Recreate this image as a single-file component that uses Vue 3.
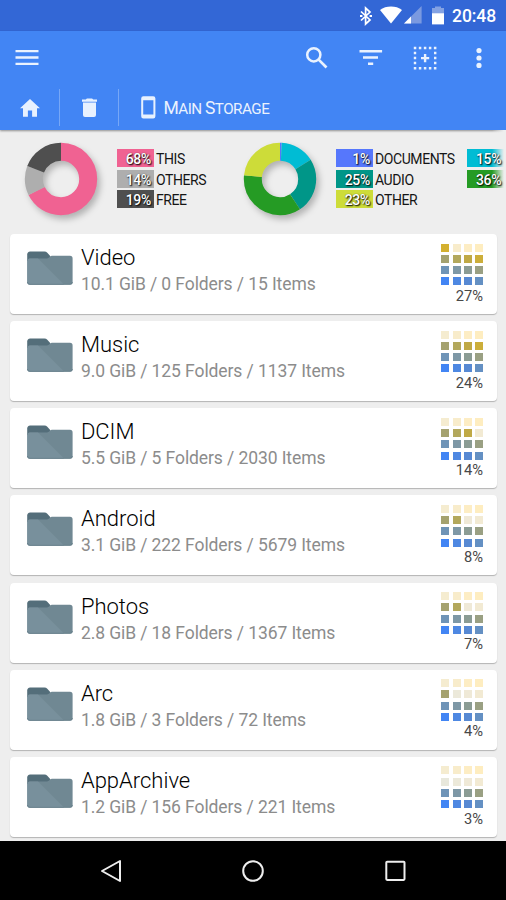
<script setup>
const lit = [
  '#d4b02f', '#d8b32c', '#dcb628', '#e0b824',
  '#a5a26f', '#b3a85c', '#c0a945', '#ccae3a',
  '#6f94b7', '#7e98a6', '#8b9c94', '#9aa083',
  '#4285f4', '#4e88e2', '#5789d3', '#6490c3',
]
const dim = [
  '#f5ecd0', '#f8eccb', '#fdedc4', '#feedc0',
  '#e8e8dc', '#ece9da', '#efe9d7', '#f2ead3',
  '#dfe6ee', '#e2e7ea', '#e5e8e6', '#e8e9e2',
  '#d6e4fc', '#d8e4f8', '#dae5f5', '#dde6f2',
]
const folders = [
  { name: 'Video', info: '10.1 GiB / 0 Folders / 15 Items', pct: 27, cells: 13 },
  { name: 'Music', info: '9.0 GiB / 125 Folders / 1137 Items', pct: 24, cells: 12 },
  { name: 'DCIM', info: '5.5 GiB / 5 Folders / 2030 Items', pct: 14, cells: 11 },
  { name: 'Android', info: '3.1 GiB / 222 Folders / 5679 Items', pct: 8, cells: 10 },
  { name: 'Photos', info: '2.8 GiB / 18 Folders / 1367 Items', pct: 7, cells: 10 },
  { name: 'Arc', info: '1.8 GiB / 3 Folders / 72 Items', pct: 4, cells: 9 },
  { name: 'AppArchive', info: '1.2 GiB / 156 Folders / 221 Items', pct: 3, cells: 8 },
]
// Cells fill from the bottom row upwards, left to right within a row.
function cellColor(index, count) {
  const rank = (3 - Math.floor(index / 4)) * 4 + (index % 4)
  return rank < count ? lit[index] : dim[index]
}
const charts = [
  {
    arcs: [
      { from: 0, to: 67.7, color: '#f06292' },
      { from: 67.7, to: 80.9, color: '#aeaeae' },
      { from: 80.9, to: 100, color: '#4f4f4f' },
    ],
    legend: [
      [
        { pct: 68, label: 'THIS', color: '#f06292' },
        { pct: 14, label: 'OTHERS', color: '#aeaeae' },
        { pct: 19, label: 'FREE', color: '#4f4f4f' },
      ],
    ],
  },
  {
    arcs: [
      { from: 0, to: 0.8, color: '#5677fc' },
      { from: 0.8, to: 16.1, color: '#00bcd4' },
      { from: 16.1, to: 40.7, color: '#009688' },
      { from: 40.7, to: 76.7, color: '#259b24' },
      { from: 76.7, to: 100, color: '#cddc39' },
    ],
    legend: [
      [
        { pct: 1, label: 'DOCUMENTS', color: '#5677fc' },
        { pct: 25, label: 'AUDIO', color: '#009688' },
        { pct: 23, label: 'OTHER', color: '#cddc39' },
      ],
      [
        { pct: 15, label: '', color: '#00bcd4' },
        { pct: 36, label: '', color: '#259b24' },
      ],
    ],
  },
]
</script>

<template>
  <div class="screen">
    <div class="status">
      <svg class="bt" width="14" height="20" viewBox="0 0 14 20">
        <path d="M2 5.5 L11 14 L6.6 18 V2 L11 6 L2 14.5" fill="none" stroke="#fff" stroke-width="1.7" />
        <path d="M1 8.9h2.4v2.2H1zM10.6 8.9H13v2.2h-2.4z" fill="#fff" />
      </svg>
      <svg class="wifi" width="22" height="18" viewBox="0 0 22 18">
        <path d="M11 17.4 L0 4 C6 -.6 16 -.6 22 4 Z" fill="#fff" />
      </svg>
      <svg class="cell-signal" width="18" height="18" viewBox="0 0 18 18">
        <path d="M0 17.6 L17.6 0 V17.6 Z" fill="#7a99e0" />
        <path d="M0 17.6 L7 10.6 V17.6 Z" fill="#fff" />
      </svg>
      <svg class="battery" width="12" height="19" viewBox="0 0 12 19">
        <path d="M0 2h3V.4h6V2h3v5.2H0z" fill="#84a2e3" />
        <path d="M0 7.2h12V18.4H0z" fill="#fff" />
      </svg>
      <span class="clock">20:48</span>
    </div>

    <header>
      <div class="toolbar">
        <svg class="menu" width="24" height="18" viewBox="0 0 24 18">
          <path d="M.5 2.1h23M.5 8.5h23M.5 14.9h23" stroke="#eaf2fe" stroke-width="2.3" />
        </svg>
        <svg class="search" width="24" height="24" viewBox="0 0 24 24">
          <circle cx="8.8" cy="8.8" r="6.6" fill="none" stroke="#eaf2fe" stroke-width="2.5" />
          <path d="M13.4 13.4 L21.5 21.5" stroke="#eaf2fe" stroke-width="2.7" />
        </svg>
        <svg class="filter" width="24" height="18" viewBox="0 0 24 18">
          <path d="M.5 2.3h22.6M4 8.5H19M9 14.7h5.2" stroke="#eaf2fe" stroke-width="2.4" />
        </svg>
        <svg class="select" width="24" height="24" viewBox="0 0 24 24">
          <path
            d="M.8 2h22.6M.8 22.2h22.6M2 .8v22.6M22.2 .8v22.6"
            stroke="#eaf2fe" stroke-width="2.4" stroke-dasharray="2.5 2.52"
          />
          <path d="M12.1 8v8.2M8 12.1h8.2" stroke="#eaf2fe" stroke-width="2.4" />
        </svg>
        <svg class="more" width="6" height="22" viewBox="0 0 6 22">
          <circle cx="3" cy="3.6" r="2.6" fill="#eaf2fe" />
          <circle cx="3" cy="11" r="2.6" fill="#eaf2fe" />
          <circle cx="3" cy="18.4" r="2.6" fill="#eaf2fe" />
        </svg>
      </div>
      <nav class="crumbs">
        <div class="crumb home">
          <svg width="20" height="18" viewBox="0 0 20 18">
            <path d="M10 0 L20 9.2H17V17.8H12.1V11.4H7.9V17.8H3V9.2H0Z" fill="#e8f1fe" />
          </svg>
        </div>
        <div class="crumb bin">
          <svg width="15" height="20" viewBox="0 0 15 20">
            <path d="M0 1.6h3.8L4.9.4h5.2l1.1 1.2H15v2.2H0z" fill="#e8f1fe" />
            <path d="M1 4.4h13V17a2 2 0 0 1-2 2H3a2 2 0 0 1-2-2z" fill="#e8f1fe" />
          </svg>
        </div>
        <div class="crumb storage">
          <svg width="15" height="23" viewBox="0 0 15 23">
            <path
              fill-rule="evenodd" fill="#e8f1fe"
              d="M2.4 .3h9.8a2.2 2.2 0 0 1 2.2 2.2v17.8a2.2 2.2 0 0 1-2.2 2.2H2.4A2.2 2.2 0 0 1 .2 20.3V2.5A2.2 2.2 0 0 1 2.4 .3zM2.2 4.2v14.3h10.2V4.2z"
            />
          </svg>
          <span class="path"><span class="cap">M</span>AIN <span class="cap">S</span>TORAGE</span>
        </div>
      </nav>
    </header>

    <section class="charts">
      <div v-for="(chart, c) in charts" :key="c" class="chart">
        <svg class="donut" width="74" height="74" viewBox="-37 -37 74 74">
          <g transform="rotate(-90)">
            <circle
              v-for="arc in chart.arcs" :key="arc.from" r="27.2" fill="none" stroke-width="18"
              pathLength="100" :stroke="arc.color"
              :stroke-dasharray="`${arc.to - arc.from} 100`" :stroke-dashoffset="-arc.from"
            />
          </g>
        </svg>
        <div v-for="(column, k) in chart.legend" :key="k" class="legend">
          <div v-for="item in column" :key="item.pct" class="entry">
            <span class="swatch" :style="{ background: item.color }">
              <span class="value">{{ item.pct }}%</span>
            </span>
            <span class="label">{{ item.label }}</span>
          </div>
        </div>
      </div>
      <div class="fade"></div>
    </section>

    <main>
      <article v-for="f in folders" :key="f.name" class="card">
        <svg class="folder" width="46" height="35" viewBox="0 0 46 35">
          <path d="M.2 4a3 3 0 0 1 3-3.4H17.5a4 4 0 0 1 2.8 1.2L23 4.8V10H.2z" fill="#546e7a" />
          <path d="M3 7.4H19.5a4 4 0 0 0 2.6-1L23.2 5.3a3 3 0 0 1 1.7-.5H43a2.6 2.6 0 0 1 2.6 2.6V31a2.6 2.6 0 0 1-2.6 2.6H3A2.7 2.7 0 0 1 .3 31V10A2.7 2.7 0 0 1 3 7.4z" fill="#708893" />
          <path d="M3 7.4H11L37 33.6H3A2.7 2.7 0 0 1 .3 31V10A2.7 2.7 0 0 1 3 7.4z" fill="#78909c" />
          <path d="M.4 31a2.7 2.7 0 0 0 2.6 2.4H43A2.6 2.6 0 0 0 45.5 31" fill="none" stroke="#627b87" stroke-width=".8" />
        </svg>
        <div class="text">
          <div class="name">{{ f.name }}</div>
          <div class="info">{{ f.info }}</div>
        </div>
        <div class="usage">
          <div class="cells">
            <i v-for="(_, i) in lit" :key="i" :style="{ background: cellColor(i, f.cells) }"></i>
          </div>
          <div class="pct">{{ f.pct }}%</div>
        </div>
      </article>
    </main>

    <footer>
      <svg width="22" height="24" viewBox="0 0 22 24">
        <path d="M20 2 V22 L2 12 Z" fill="none" stroke="#eee" stroke-width="2" stroke-linejoin="round" />
      </svg>
      <svg width="24" height="24" viewBox="0 0 24 24">
        <circle cx="12" cy="12" r="9.8" fill="none" stroke="#eee" stroke-width="2" />
      </svg>
      <svg width="22" height="22" viewBox="0 0 22 22">
        <rect x="2.3" y="1.7" width="18.2" height="18.2" rx=".8" fill="none" stroke="#eee" stroke-width="2" />
      </svg>
    </footer>
  </div>
</template>

<style>
body {
  margin: 0;
  overflow: hidden;
}
</style>

<style scoped>
.screen {
  width: 506px;
  height: 900px;
  display: flex;
  flex-direction: column;
  overflow: hidden;
  background: #eee;
  font-family: Roboto, sans-serif;
}
svg {
  display: block;
  flex: none;
}
.status {
  height: 31px;
  flex: none;
  box-sizing: border-box;
  padding-right: 10px;
  display: flex;
  justify-content: flex-end;
  align-items: center;
  background: #3367d6;
}
.bt { margin-right: 7px; }
.wifi { margin-right: 2px; margin-bottom: 1px; }
.cell-signal { margin-right: 10px; margin-bottom: 1px; }
.battery { margin-right: 8px; margin-bottom: 1px; }
.clock {
  color: #fff;
  font-size: 17.5px;
  font-weight: 500;
  letter-spacing: -0.1px;
  line-height: 31px;
  padding-top: 1px;
}
header {
  height: 99px;
  flex: none;
  background: #4285f4;
  box-shadow: 0 1px 2px rgba(0, 0, 0, 0.4);
  position: relative;
}
.toolbar {
  height: 54px;
  display: flex;
  align-items: center;
  padding: 0 24px 0 15px;
}
.search { margin-left: auto; margin-right: 30px; }
.filter { margin-right: 30px; }
.select { margin-right: 39px; }
.crumbs {
  display: flex;
  height: 45px;
}
.crumb {
  display: flex;
  align-items: center;
  height: 37px;
  margin-top: 4px;
  box-sizing: border-box;
}
.home {
  width: 60px;
  padding-left: 20px;
  border-right: 1px solid #76a7f7;
}
.bin {
  width: 59px;
  padding-left: 22px;
  border-right: 1px solid #76a7f7;
}
.storage { padding-left: 22px; }
.path {
  margin-left: 7.5px;
  padding-top: 1px;
  color: #eaf2fe;
  font-size: 15.2px;
  letter-spacing: -0.5px;
  white-space: nowrap;
}
.cap { font-size: 17.5px; }
.charts {
  height: 104px;
  flex: none;
  display: flex;
  position: relative;
  overflow: hidden;
}
.chart {
  display: flex;
  padding: 12px 0 0 24px;
  width: 195px;
  flex: none;
}
.chart + .chart { width: 400px; }
.donut {
  overflow: visible;
  filter: drop-shadow(3px 4px 3px rgba(0, 0, 0, 0.25));
}
.legend {
  margin-left: 18.5px;
  padding-top: 7px;
  display: flex;
  flex-direction: column;
  gap: 2.5px;
}
.legend + .legend { margin-left: 12px; }
.entry {
  display: flex;
  height: 18px;
  line-height: 21px;
  font-size: 14px;
}
.swatch {
  width: 37px;
  box-sizing: border-box;
  padding-right: 2.5px;
  text-align: right;
}
.value {
  position: relative;
  z-index: 1;
  color: #fff;
  font-weight: 500;
  letter-spacing: -0.3px;
  text-shadow: 1px 1px 1.5px #000, 0 0 1px rgba(0, 0, 0, 0.5);
}
.label {
  margin-left: 2.5px;
  letter-spacing: -0.42px;
  color: #151515;
}
.fade {
  position: absolute;
  right: 2px;
  top: 0;
  width: 12px;
  height: 100px;
  background: linear-gradient(90deg, rgba(238, 238, 238, 0), #eee);
  box-shadow: 2px 0 #eee;
}
main {
  flex: 1;
  min-height: 0;
  overflow: hidden;
  padding: 0 9.5px;
  display: flex;
  flex-direction: column;
  gap: 7.15px;
}
.card {
  height: 80px;
  flex: none;
  display: flex;
  background: #fff;
  border-radius: 4px;
  box-shadow: 0 1px 1px rgba(0, 0, 0, 0.25);
}
.folder { margin: 17px 8.4px 0 17px; }
.text { flex: 1; white-space: nowrap; }
.name {
  margin-top: 10px;
  font-size: 22px;
  line-height: 28px;
  font-weight: 300;
  color: #000;
}
.info {
  font-size: 17.5px;
  letter-spacing: -0.09px;
  line-height: 24px;
  color: #8c8c8c;
}
.usage {
  padding: 9.5px 13.5px 0 0;
}
.cells {
  display: grid;
  grid-template-columns: repeat(4, 8px);
  grid-auto-rows: 8px;
  gap: 3.25px;
}
.pct {
  margin-top: 1.5px;
  text-align: right;
  font-size: 14.7px;
  line-height: 18px;
  color: #484848;
}
footer {
  height: 59px;
  flex: none;
  box-sizing: border-box;
  background: #000;
  display: flex;
  align-items: center;
  justify-content: space-between;
  padding: 0 100px;
}
</style>
